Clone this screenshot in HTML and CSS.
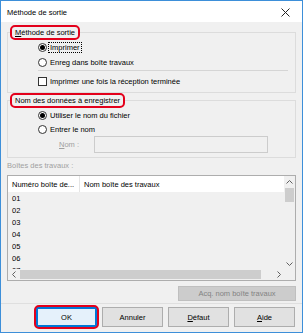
FILE: index.html
```html
<!DOCTYPE html>
<html lang="fr">

<head>
  <meta charset="UTF-8">
  <title>Méthode de sortie</title>
  <link rel="stylesheet" href="styles.css">
</head>

<body>
  <div class="window">
    <div class="titlebar">
      <span>Méthode de sortie</span>
      <svg class="close" width="9" height="9" viewBox="0 0 9 9">
        <path d="M0.5 0.5 L8.5 8.5 M8.5 0.5 L0.5 8.5" stroke="#222" stroke-width="1" fill="none" />
      </svg>
    </div>

    <div class="content">
      <fieldset class="group">
        <legend class="mark"><u>M</u>éthode de sortie</legend>
        <div class="opts">
          <div class="opt"><span class="radio on"></span><span class="focus">Imprimer</span></div>
          <div class="opt"><span class="radio"></span><span>Enreg dans boîte travaux</span></div>
          <div class="sep"></div>
          <div class="opt check-row"><span class="check"></span><span>Imprimer une fois la réception terminée</span></div>
        </div>
      </fieldset>

      <fieldset class="group">
        <legend class="mark">Nom des données à enregistrer</legend>
        <div class="opts">
          <div class="opt small"><span class="radio on"></span><span>Utiliser le nom du fichier</span></div>
          <div class="opt small"><span class="radio"></span><span>Entrer le nom</span></div>
          <div class="name-row">
            <span class="name-label disabled"><u>N</u>om :</span>
            <span class="name-input"></span>
          </div>
        </div>
      </fieldset>

      <div class="box-label disabled">Boîtes des travaux :</div>

      <div class="list">
        <div class="list-main">
          <div class="list-head">
            <div class="col1">Numéro boîte de...</div>
            <div class="col2">Nom boîte des travaux</div>
          </div>
          <div class="list-body">
            <div class="row">01</div>
            <div class="row">02</div>
            <div class="row">03</div>
            <div class="row">04</div>
            <div class="row">05</div>
            <div class="row">06</div>
            <div class="row">07</div>
          </div>
        </div>
        <div class="vscroll">
          <span class="arrow">
            <svg width="7" height="4" viewBox="0 0 7 4"><path d="M0.5 3.5 L3.5 0.5 L6.5 3.5" stroke="#606060" fill="none" /></svg>
          </span>
          <span class="vthumb"></span>
          <span class="arrow down">
            <svg width="7" height="4" viewBox="0 0 7 4"><path d="M0.5 0.5 L3.5 3.5 L6.5 0.5" stroke="#606060" fill="none" /></svg>
          </span>
        </div>
        <div class="hscroll">
          <span class="arrow">
            <svg width="4" height="7" viewBox="0 0 4 7"><path d="M3.5 0.5 L0.5 3.5 L3.5 6.5" stroke="#606060" fill="none" /></svg>
          </span>
          <span class="hthumb"></span>
          <span class="arrow right">
            <svg width="4" height="7" viewBox="0 0 4 7"><path d="M0.5 0.5 L3.5 3.5 L0.5 6.5" stroke="#606060" fill="none" /></svg>
          </span>
        </div>
        <div class="corner"></div>
      </div>

      <button class="btn acq" type="button" disabled>Acq. nom boîte travaux</button>

      <div class="bottom-line"></div>

      <div class="buttons">
        <button class="btn default" type="button">OK</button>
        <button class="btn" type="button">Annuler</button>
        <button class="btn" type="button"><u>D</u>éfaut</button>
        <button class="btn" type="button"><u>A</u>ide</button>
      </div>
    </div>
  </div>
</body>

</html>
```

FILE: styles.css
```css
* {
  box-sizing: border-box;
}

body {
  margin: 0;
  font-family: "Liberation Sans", Arial, sans-serif;
  font-size: 7.5px;
  color: #000;
  background: #fff;
}

.window {
  width: 303px;
  height: 333px;
  border: 1px solid #3d8fd9;
  background: #f0f0f0;
  display: flex;
  flex-direction: column;
}

.titlebar {
  height: 21px;
  flex: none;
  background: #fff;
  display: flex;
  align-items: center;
  justify-content: space-between;
  padding: 1px 12px 0 6px;
}

.content {
  flex: 1;
  padding: 3px 6px 0;
  display: flex;
  flex-direction: column;
}

/* group boxes */
.group {
  margin: 0;
  padding: 0;
  min-width: 0;
  border: 1px solid #dcdcdc;
}

.mark {
  margin-left: 2px;
  padding: 0 3px;
  height: 15px;
  line-height: 11px;
  border: 2px solid #e3001b;
  border-radius: 5px;
}

.opts {
  padding: 0 7px 4px 30px;
}

.opt {
  height: 15px;
  display: flex;
  align-items: center;
  gap: 3px;
}

.opt.small {
  height: 14px;
}

.check-row {
  height: 14px;
  margin-top: 3px;
}

.sep {
  height: 1px;
  background: #d5d5d5;
}

.radio {
  width: 9px;
  height: 9px;
  border: 1px solid #333;
  border-radius: 50%;
  background: #fff;
  display: flex;
  align-items: center;
  justify-content: center;
}

.radio.on::after {
  content: "";
  width: 5px;
  height: 5px;
  border-radius: 50%;
  background: #000;
}

.check {
  width: 9px;
  height: 9px;
  border: 1px solid #333;
  background: #fff;
}

.focus {
  outline: 1px dotted #000;
  padding: 0 1px;
  margin-left: -1px;
}

.disabled {
  color: #a0a0a0;
}

.name-row {
  height: 17px;
  display: flex;
  align-items: center;
}

.name-label {
  width: 56px;
  padding-left: 21px;
  flex: none;
}

.name-input {
  width: 174px;
  height: 17px;
  border: 1px solid #cccccc;
  background: #f0f0f0;
}

.box-label {
  height: 16px;
  line-height: 16px;
  margin-bottom: 1px;
}

/* list view */
.list {
  height: 106px;
  flex: none;
  border: 1px solid #adadad;
  display: grid;
  grid-template-columns: 1fr 11px;
  grid-template-rows: 1fr 11px;
}

.list-main {
  overflow: hidden;
  background: #f0f0f0;
}

.list-head {
  height: 16px;
  display: flex;
  background: #fff;
}

.list-head div {
  display: flex;
  align-items: center;
  padding-left: 4px;
}

.col1 {
  width: 72px;
  border-right: 1px solid #e5e5e5;
}

.list-body {
  padding-top: 1px;
}

.row {
  height: 12px;
  line-height: 12px;
  padding-left: 4px;
}

.vscroll {
  display: flex;
  flex-direction: column;
  background: #f0f0f0;
}

.hscroll {
  display: flex;
  background: #f0f0f0;
}

.arrow {
  width: 11px;
  height: 11px;
  flex: none;
  display: flex;
  align-items: center;
  justify-content: center;
}

.arrow.down,
.arrow.right {
  margin: auto 0 0 auto;
}

.hscroll .arrow.right {
  margin: 0 0 0 auto;
}

.vthumb {
  height: 14px;
  margin: 1px 1px 0;
  background: #cdcdcd;
}

.hthumb {
  width: 241px;
  margin: 1px 0 1px 1px;
  background: #cdcdcd;
}

.corner {
  background: #f0f0f0;
}

/* buttons */
.btn {
  font: inherit;
  color: #000;
  background: #e1e1e1;
  border: 1px solid #adadad;
  border-radius: 0;
  padding: 0;
  height: 20px;
  width: 61px;
}

.btn.acq {
  align-self: flex-end;
  width: 118px;
  height: 15px;
  margin-top: 5px;
  background: #cccccc;
  border-color: #bfbfbf;
  color: #838383;
}

.bottom-line {
  height: 1px;
  margin: 2px -6px 0;
  background: #dfdfdf;
}

.buttons {
  display: flex;
  justify-content: flex-end;
  gap: 5px;
  margin-top: 3px;
  padding-right: 1px;
}

.btn.default {
  position: relative;
  border-color: #0078d7;
  box-shadow: inset 0 0 0 1px #0078d7;
  background: #e5f1fb;
}

.btn.default::after {
  content: "";
  position: absolute;
  inset: -3px;
  border: 2px solid #e3001b;
  border-radius: 5px;
}
```
